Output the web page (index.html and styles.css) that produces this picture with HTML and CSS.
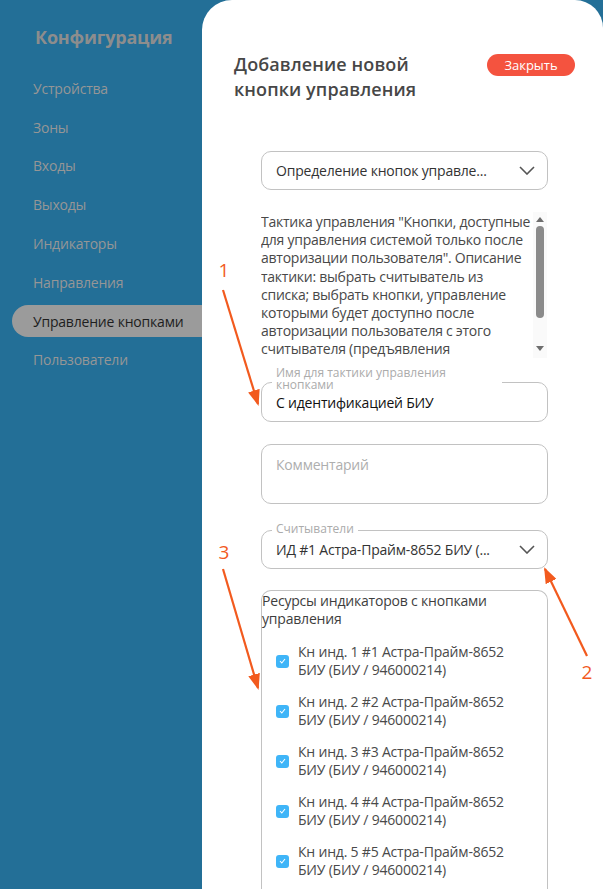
FILE: index.html
```html
<!DOCTYPE html>
<html lang="ru">
<head>
<meta charset="utf-8">
<link rel="stylesheet" href="styles.css">
</head>
<body>
<div class="app">
  <aside class="sidebar">
    <div class="side-title">Конфигурация</div>
    <nav class="nav">
      <div class="nav-item">Устройства</div>
      <div class="nav-item">Зоны</div>
      <div class="nav-item">Входы</div>
      <div class="nav-item">Выходы</div>
      <div class="nav-item">Индикаторы</div>
      <div class="nav-item">Направления</div>
      <div class="nav-item active"><span>Управление кнопками</span></div>
      <div class="nav-item">Пользователи</div>
    </nav>
  </aside>
  <main class="panel">
    <header class="panel-head">
      <h1 class="panel-title">Добавление новой<br>кнопки управления</h1>
      <button class="close-btn">Закрыть</button>
    </header>
    <div class="form">
      <div class="field select first">
        <span class="value">Определение кнопок управле...</span>
        <svg class="chev" width="16" height="9" viewBox="0 0 16 9"><path d="M1 1l7 7 7-7" fill="none" stroke="#555" stroke-width="1.6"/></svg>
      </div>
      <div class="desc">
        <div class="desc-text">Тактика управления "Кнопки, доступные для управления системой только после авторизации пользователя". Описание тактики: выбрать считыватель из списка; выбрать кнопки, управление которыми будет доступно после авторизации пользователя с этого считывателя (предъявления<br>ключа)</div>
        <div class="scroll">
          <span class="arr up"></span>
          <span class="thumb"></span>
          <span class="arr down"></span>
        </div>
      </div>
      <div class="field name">
        <span class="legend two">Имя для тактики управления кнопками</span>
        <span class="value dark">С идентификацией БИУ</span>
      </div>
      <div class="field comment">
        <span class="placeholder">Комментарий</span>
      </div>
      <div class="field select readers">
        <span class="legend">Считыватели</span>
        <span class="value">ИД #1 Астра-Прайм-8652 БИУ (...</span>
        <svg class="chev" width="16" height="9" viewBox="0 0 16 9"><path d="M1 1l7 7 7-7" fill="none" stroke="#555" stroke-width="1.6"/></svg>
      </div>
      <div class="resources">
        <div class="res-title">Ресурсы индикаторов с кнопками управления</div>
        <div class="res-list">
          <div class="res-item"><span class="cb"><svg width="7" height="6" viewBox="0 0 7 6"><path d="M1 3l1.8 2L6 1" fill="none" stroke="#fff" stroke-width="1.1"/></svg></span><span>Кн инд. 1 #1 Астра-Прайм-8652 БИУ (БИУ / 946000214)</span></div>
          <div class="res-item"><span class="cb"><svg width="7" height="6" viewBox="0 0 7 6"><path d="M1 3l1.8 2L6 1" fill="none" stroke="#fff" stroke-width="1.1"/></svg></span><span>Кн инд. 2 #2 Астра-Прайм-8652 БИУ (БИУ / 946000214)</span></div>
          <div class="res-item"><span class="cb"><svg width="7" height="6" viewBox="0 0 7 6"><path d="M1 3l1.8 2L6 1" fill="none" stroke="#fff" stroke-width="1.1"/></svg></span><span>Кн инд. 3 #3 Астра-Прайм-8652 БИУ (БИУ / 946000214)</span></div>
          <div class="res-item"><span class="cb"><svg width="7" height="6" viewBox="0 0 7 6"><path d="M1 3l1.8 2L6 1" fill="none" stroke="#fff" stroke-width="1.1"/></svg></span><span>Кн инд. 4 #4 Астра-Прайм-8652 БИУ (БИУ / 946000214)</span></div>
          <div class="res-item"><span class="cb"><svg width="7" height="6" viewBox="0 0 7 6"><path d="M1 3l1.8 2L6 1" fill="none" stroke="#fff" stroke-width="1.1"/></svg></span><span>Кн инд. 5 #5 Астра-Прайм-8652 БИУ (БИУ / 946000214)</span></div>
          <div class="res-item"><span class="cb"><svg width="7" height="6" viewBox="0 0 7 6"><path d="M1 3l1.8 2L6 1" fill="none" stroke="#fff" stroke-width="1.1"/></svg></span><span>Кн инд. 6 #6 Астра-Прайм-8652 БИУ (БИУ / 946000214)</span></div>
        </div>
      </div>
    </div>
  </main>
</div>
<svg class="annot" width="603" height="889" viewBox="0 0 603 889">
  <defs>
    <marker id="ah" markerWidth="16" markerHeight="12" refX="14" refY="6" orient="auto" markerUnits="userSpaceOnUse">
      <path d="M0 0L16 6L0 12z" fill="#f25a1e"/>
    </marker>
  </defs>
  <g stroke="#f25a1e" stroke-width="2.2" fill="none">
    <line x1="223" y1="290" x2="258" y2="404" marker-end="url(#ah)"/>
    <line x1="223" y1="569" x2="258" y2="688" marker-end="url(#ah)"/>
    <line x1="587" y1="656" x2="545" y2="569" marker-end="url(#ah)"/>
  </g>
  <g class="num" fill="#f25a1e">
    <text x="224" y="277" text-anchor="middle">1</text>
    <text x="224" y="559" text-anchor="middle">3</text>
    <text x="587" y="679" text-anchor="middle">2</text>
  </g>
</svg>
</body>
</html>
```

FILE: styles.css
```css
* { box-sizing: border-box; }
html, body { margin: 0; padding: 0; }
body {
  width: 603px;
  height: 889px;
  overflow: hidden;
  background: #236f97;
  font-family: "Open Sans", "Noto Sans", sans-serif;
  position: relative;
}
.app {
  display: flex;
  height: 889px;
}
.sidebar {
  width: 202px;
  flex: none;
}
.side-title {
  padding-left: 35px;
  height: 69px;
  padding-top: 24px;
  font-size: 18px;
  font-weight: 700;
  color: #8d8d8d;
  line-height: 26px;
  letter-spacing: -0.2px;
}
.nav {
  display: flex;
  flex-direction: column;
}
.nav-item {
  height: 38.8px;
  display: flex;
  align-items: center;
  padding-left: 33px;
  font-size: 14px;
  color: #969696;
  letter-spacing: -0.2px;
}
.nav-item.active {
  padding-left: 12px;
}
.nav-item.active span {
  flex: 1;
  height: 32px;
  display: flex;
  align-items: center;
  padding-left: 21px;
  background: #9b9b9b;
  color: #1e1e1e;
  border-radius: 16px 0 0 16px;
}
.panel {
  flex: 1;
  background: #fff;
  border-radius: 30px 28px 0 0;
  padding: 52px 28px 0 32px;
  overflow: hidden;
}
.panel-head {
  display: flex;
  align-items: flex-start;
  justify-content: space-between;
}
.panel-title {
  margin: 0;
  font-size: 18px;
  font-weight: 600;
  color: #474747;
  line-height: 25px;
  letter-spacing: 0.1px;
}
.close-btn {
  margin-top: 2px;
  width: 88px;
  height: 22px;
  border: 0;
  border-radius: 11px;
  background: #f4533f;
  color: #fff;
  font-family: inherit;
  font-size: 13px;
  padding: 0;
  line-height: 22px;
}
.form {
  margin-left: 27px;
  width: 287px;
  display: flex;
  flex-direction: column;
  letter-spacing: -0.2px;
}
.field {
  position: relative;
  border: 1px solid #c2c2c2;
  border-radius: 10px;
  display: flex;
  align-items: center;
  padding-left: 14px;
  font-size: 14px;
  color: #333;
}
.select { height: 39px; }
.first { margin-top: 49px; }
.chev {
  position: absolute;
  right: 12px;
  top: 14px;
}
.value.dark { color: #111; }
.desc {
  margin-top: 22px;
  height: 146px;
  display: flex;
  overflow: hidden;
}
.desc-text {
  flex: 1;
  font-size: 14px;
  line-height: 18.2px;
  color: #484848;
  padding-top: 1px;
  letter-spacing: -0.25px;
}
.scroll {
  width: 14px;
  margin-right: 1px;
  background: #fafafa;
  display: flex;
  flex-direction: column;
  align-items: center;
  padding-top: 5px;
}
.arr {
  width: 0;
  height: 0;
  border-left: 4px solid transparent;
  border-right: 4px solid transparent;
}
.arr.up { border-bottom: 5px solid #6e6e6e; }
.arr.down { border-top: 5px solid #6e6e6e; margin-top: auto; margin-bottom: 7px; }
.thumb {
  margin-top: 4px;
  width: 8px;
  height: 92px;
  background: #8b8b8b;
  border-radius: 4px;
}
.name {
  margin-top: 24px;
  height: 40px;
}
.legend {
  position: absolute;
  left: 10px;
  top: -8px;
  background: #fff;
  padding: 0 4px;
  font-size: 12px;
  line-height: 12px;
  color: #ababab;
  letter-spacing: 0;
}
.legend.two {
  top: -16px;
  width: 230px;
  padding-right: 10px;
}
.comment {
  margin-top: 22px;
  height: 60px;
  align-items: flex-start;
  padding-top: 10px;
}
.placeholder { color: #aeaeae; }
.readers { margin-top: 26px; }
.resources {
  margin-top: 21px;
  border: 1px solid #c2c2c2;
  border-bottom: 0;
  border-radius: 10px 10px 0 0;
  height: 400px;
  font-size: 14px;
  color: #4a4a4a;
}
.res-title {
  line-height: 18px;
  padding-top: 1px;
  color: #3e3e3e;
}
.res-list {
  margin-top: 15px;
  padding-left: 14px;
  display: flex;
  flex-direction: column;
  gap: 14px;
}
.res-item {
  display: flex;
  align-items: center;
  gap: 9px;
  line-height: 18px;
  width: 250px;
}
.cb {
  flex: none;
  width: 13px;
  height: 13px;
  border-radius: 3px;
  background: #3fb5f8;
  display: flex;
  align-items: center;
  justify-content: center;
}
.annot {
  position: absolute;
  left: 0;
  top: 0;
  pointer-events: none;
}
.num text {
  font-family: "Open Sans", sans-serif;
  font-size: 19px;
}
```
